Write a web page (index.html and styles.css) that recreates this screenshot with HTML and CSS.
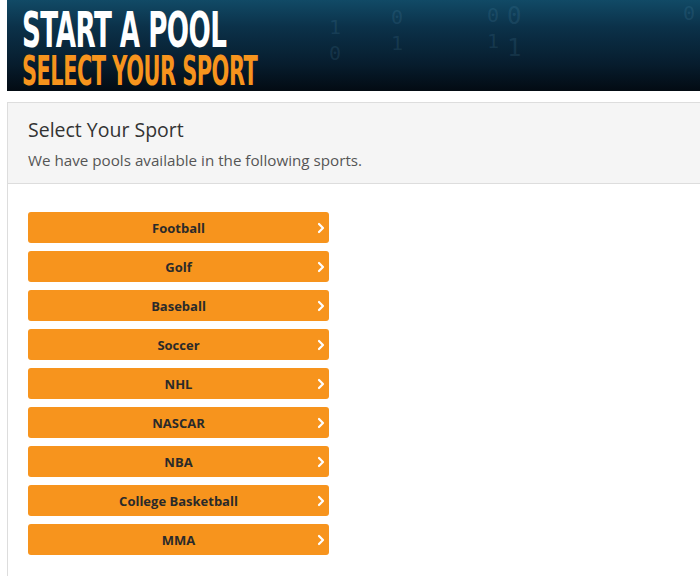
FILE: index.html
```html
<!DOCTYPE html>
<html>
<head>
<meta charset="utf-8">
<link rel="stylesheet" href="styles.css">
</head>
<body>
<div class="page">
  <div class="banner">
    <div class="digits">
      <span class="d d1">0<br>1</span>
      <span class="d d2">1<br>0</span>
      <span class="d d3">0<br>1</span>
      <span class="d d4">0<br>1</span>
      <span class="d d5">0</span>
    </div>
    <div class="banner-text">
      <div class="b1">START A POOL</div>
      <div class="b2">SELECT YOUR SPORT</div>
    </div>
  </div>
  <div class="panel">
    <div class="panel-head">
      <h1 class="title">Select Your Sport</h1>
      <p class="sub">We have pools available in the following sports.</p>
    </div>
    <div class="panel-body">
      <a class="sport">Football<svg class="chev" viewBox="0 0 8 12"><path d="M2 2l4 4-4 4" fill="none" stroke="#fff" stroke-width="2.2" stroke-linecap="round" stroke-linejoin="round"/></svg></a>
      <a class="sport">Golf<svg class="chev" viewBox="0 0 8 12"><path d="M2 2l4 4-4 4" fill="none" stroke="#fff" stroke-width="2.2" stroke-linecap="round" stroke-linejoin="round"/></svg></a>
      <a class="sport">Baseball<svg class="chev" viewBox="0 0 8 12"><path d="M2 2l4 4-4 4" fill="none" stroke="#fff" stroke-width="2.2" stroke-linecap="round" stroke-linejoin="round"/></svg></a>
      <a class="sport">Soccer<svg class="chev" viewBox="0 0 8 12"><path d="M2 2l4 4-4 4" fill="none" stroke="#fff" stroke-width="2.2" stroke-linecap="round" stroke-linejoin="round"/></svg></a>
      <a class="sport">NHL<svg class="chev" viewBox="0 0 8 12"><path d="M2 2l4 4-4 4" fill="none" stroke="#fff" stroke-width="2.2" stroke-linecap="round" stroke-linejoin="round"/></svg></a>
      <a class="sport">NASCAR<svg class="chev" viewBox="0 0 8 12"><path d="M2 2l4 4-4 4" fill="none" stroke="#fff" stroke-width="2.2" stroke-linecap="round" stroke-linejoin="round"/></svg></a>
      <a class="sport">NBA<svg class="chev" viewBox="0 0 8 12"><path d="M2 2l4 4-4 4" fill="none" stroke="#fff" stroke-width="2.2" stroke-linecap="round" stroke-linejoin="round"/></svg></a>
      <a class="sport">College Basketball<svg class="chev" viewBox="0 0 8 12"><path d="M2 2l4 4-4 4" fill="none" stroke="#fff" stroke-width="2.2" stroke-linecap="round" stroke-linejoin="round"/></svg></a>
      <a class="sport">MMA<svg class="chev" viewBox="0 0 8 12"><path d="M2 2l4 4-4 4" fill="none" stroke="#fff" stroke-width="2.2" stroke-linecap="round" stroke-linejoin="round"/></svg></a>
    </div>
  </div>
</div>
</body>
</html>
```
FILE: styles.css
```css
html, body { margin: 0; padding: 0; background: #fff; }
body { font-family: "Open Sans", "Noto Sans", sans-serif; color: #333; }
.page { padding-left: 7px; width: 693px; overflow: hidden; }
.banner {
  position: relative;
  height: 91px;
  background: linear-gradient(180deg, #114a66 0%, #0b3149 30%, #071d2e 70%, #030b13 100%);
  overflow: hidden;
}
.digits { position: absolute; inset: 0; }
.d {
  position: absolute;
  font-family: "DejaVu Sans Mono", monospace;
  font-size: 20px;
  line-height: 26px;
  color: rgba(110, 170, 200, 0.14);
}
.d1 { left: 384px; top: 4px; }
.d2 { left: 322px; top: 14px; }
.d3 { left: 480px; top: 2px; }
.d4 { left: 500px; top: 0px; font-size: 24px; line-height: 32px; }
.d5 { left: 676px; top: 0px; }
.banner-text {
  position: relative;
  padding: 8px 0 0 15px;
  font-family: "DejaVu Sans", sans-serif;
  font-weight: bold;
}
.b1 {
  color: #fff;
  font-size: 49px;
  line-height: 46px;
  letter-spacing: -1px;
  transform: scaleX(0.535);
  transform-origin: left top;
  white-space: nowrap;
}
.b2 {
  margin-top: -1px;
  color: #f7941d;
  font-size: 41px;
  line-height: 36px;
  letter-spacing: -1px;
  transform: scaleX(0.51);
  transform-origin: left top;
  white-space: nowrap;
}
.panel {
  margin-top: 11px;
  border: 1px solid #dddddd;
  border-right: none;
  min-height: 480px;
}
.panel-head {
  background: #f5f5f5;
  border-bottom: 1px solid #dddddd;
  padding: 13px 20px 12px 20px;
}
.title {
  margin: 0;
  font-size: 19.5px;
  line-height: 27px;
  font-weight: 500;
  color: #333;
}
.sub {
  margin: 7px 0 0 0;
  font-size: 15.2px;
  line-height: 21px;
  color: #555;
}
.panel-body {
  padding: 28px 20px 20px 20px;
  display: flex;
  flex-direction: column;
  gap: 8px;
}
.sport {
  position: relative;
  display: flex;
  align-items: center;
  justify-content: center;
  width: 301px;
  height: 31px;
  background: #f7941d;
  border-radius: 3px;
  font-size: 13px;
  font-weight: bold;
  color: #2a2a2a;
}
.chev {
  position: absolute;
  right: 4px;
  top: 10px;
  width: 8px;
  height: 12px;
}
```
